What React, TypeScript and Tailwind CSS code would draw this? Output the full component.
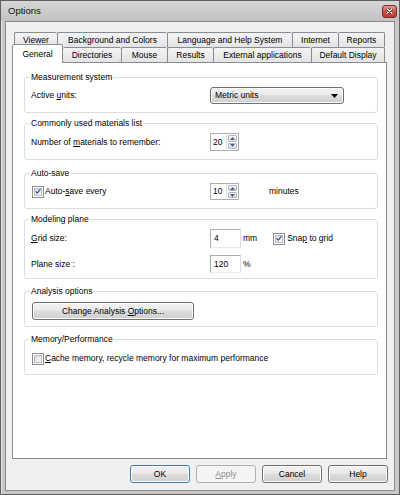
import React from "react";

const FONT = "font-['Liberation_Sans',Arial,sans-serif]";

function CheckMark() {
  return (
    <svg width="9" height="9" viewBox="0 0 9 9">
      <path d="M1.3 4.6 L3.4 7 L7.6 1.6" fill="none" stroke="#2f4a86" strokeWidth="1.7" strokeLinecap="round" strokeLinejoin="round" />
    </svg>
  );
}

function Checkbox({ checked }: { checked: boolean }) {
  return (
    <div className="w-[12px] h-[12px] shrink-0 border border-[#8f8f8f] bg-white p-px">
      <div className="w-full h-full border border-[#b9bec6] bg-gradient-to-br from-[#d7dbe1] to-[#f7f8f9] flex items-center justify-center">
        {checked && <CheckMark />}
      </div>
    </div>
  );
}

function SpinArrow({ up }: { up: boolean }) {
  return (
    <svg width="5" height="3" viewBox="0 0 5 3">
      <path d={up ? "M0 3 L2.5 0 L5 3 Z" : "M0 0 L5 0 L2.5 3 Z"} fill="#4d6185" />
    </svg>
  );
}

function Spinner({ value, h }: { value: string; h: string }) {
  return (
    <div className={`flex ${h}`}>
      <div className="w-[16px] h-full border border-[#abadb3] border-r-0 bg-white pl-[2px] flex items-center">
        {value}
      </div>
      <div className="w-[13px] h-full flex flex-col border border-[#abadb3] border-l-[#dbdfe6] bg-white p-px gap-px">
        <div className="flex-1 rounded-[1px] border border-[#b3b9c3] bg-gradient-to-b from-[#f6f6f6] to-[#dfe2e7] flex items-center justify-center">
          <SpinArrow up />
        </div>
        <div className="flex-1 rounded-[1px] border border-[#b3b9c3] bg-gradient-to-b from-[#f6f6f6] to-[#dfe2e7] flex items-center justify-center">
          <SpinArrow up={false} />
        </div>
      </div>
    </div>
  );
}

function TextBox({ value, h }: { value: string; h: string }) {
  return (
    <div className={`w-[31px] ${h} border border-[#abadb3] border-b-[#e3e9ef] border-r-[#dbdfe6] bg-white pl-[3px] flex items-center`}>
      {value}
    </div>
  );
}

function Group({ title, mt, children }: { title: string; mt: string; children: React.ReactNode }) {
  return (
    <fieldset className={`w-[354px] ${mt} border border-[#d5dfe5] rounded-[3px]`}>
      <legend className="ml-[5px] px-[1px] leading-[10px]">{title}</legend>
      {children}
    </fieldset>
  );
}

const btnBase =
  "h-[18px] rounded-[3px] border flex items-center justify-center bg-[linear-gradient(#f2f2f2,#ebebeb_45%,#dddddd_50%,#cfcfcf)] shadow-[inset_0_0_0_1px_#fcfcfc]";

function Tab({ label, w, last }: { label: string; w: string; last?: boolean }) {
  return (
    <div
      className={`${w} h-full shrink-0 border-t border-l ${last ? "border-r" : ""} border-[#898c95] rounded-t-[2px] bg-gradient-to-b from-[#f4f4f4] to-[#e4e4e4] flex items-center justify-center`}
    >
      {label}
    </div>
  );
}

export default function App() {
  return (
    <div className={`w-[400px] h-[495px] border border-[#5f5f5f] bg-[#c8c8c8] shadow-[inset_1px_1px_0_#e6e6e6] flex flex-col text-[8.5px] text-black ${FONT}`}>
      {/* Title bar */}
      <div className="h-[20px] shrink-0 flex items-center justify-between pl-[7px] pr-[2px] bg-gradient-to-b from-[#d6d6d6] to-[#c2c2c2]">
        <span className="text-[9.5px] text-[#111]">Options</span>
        <div className="w-[15px] h-[13px] rounded-[3px] border border-[#7d2b2b] bg-gradient-to-b from-[#e39b93] via-[#c9544a] to-[#b53c33] flex items-center justify-center">
          <svg width="7" height="6" viewBox="0 0 7 6">
            <path d="M1 0.8 L6 5.2 M6 0.8 L1 5.2" stroke="#3a1010" strokeWidth="2.6" strokeLinecap="round" />
            <path d="M1 0.8 L6 5.2 M6 0.8 L1 5.2" stroke="#ffffff" strokeWidth="1.4" strokeLinecap="round" />
          </svg>
        </div>
      </div>

      {/* Client area */}
      <div className="flex-1 mx-[4px] mb-[3px] border border-[#8a8a8a] bg-[#f0f0f0] flex flex-col pt-[10px] pl-[6px]">
        {/* Tab row 1 */}
        <div className="h-[15px] flex ml-[2px]">
          <Tab label="Viewer" w="w-[43px]" />
          <Tab label="Background and Colors" w="w-[110px]" />
          <Tab label="Language and Help System" w="w-[125px]" />
          <Tab label="Internet" w="w-[46px]" />
          <Tab label="Reports" w="w-[47px]" last />
        </div>
        {/* Tab row 2 */}
        <div className="h-[15px] flex items-end">
          <div className="relative z-10 w-[51px] h-[19px] -mb-px shrink-0 border-t border-l border-r border-[#898c95] rounded-t-[2px] bg-white flex justify-center pt-[3px]">
            General
          </div>
          <div className="w-[58px] h-full shrink-0 border-t border-[#898c95] rounded-t-[2px] bg-gradient-to-b from-[#f4f4f4] to-[#e4e4e4] flex items-center justify-center">
            Directories
          </div>
          <Tab label="Mouse" w="w-[46px]" />
          <Tab label="Results" w="w-[46px]" />
          <Tab label="External applications" w="w-[98px]" />
          <Tab label="Default Display" w="w-[74px]" last />
        </div>

        {/* Panel */}
        <div className="w-[375px] h-[397px] shrink-0 border border-[#898c95] bg-white flex flex-col pl-[11px]">
          <Group title="Measurement system" mt="mt-[9px]">
            <div className="flex items-center mt-[5px] mb-[8px] pl-[6px] h-[17px]">
              <span className="w-[179px] shrink-0">
                Active <u className="underline-offset-1">u</u>nits:
              </span>
              <div className="w-[134px] h-[17px] rounded-[3px] border border-[#707070] bg-[linear-gradient(#f2f2f2,#ebebeb_45%,#dddddd_50%,#cfcfcf)] shadow-[inset_0_0_0_1px_#fafafa] flex items-center justify-between pl-[4px] pr-[5px]">
                <span>Metric units</span>
                <svg width="7" height="4" viewBox="0 0 7 4">
                  <path d="M0 0 H7 L3.5 4 Z" fill="#000" />
                </svg>
              </div>
            </div>
          </Group>

          <Group title="Commonly used materials list" mt="mt-[5px]">
            <div className="flex items-center mt-[5px] mb-[8px] pl-[6px] h-[18px]">
              <span className="w-[179px] shrink-0">
                Number of <u className="underline-offset-1">m</u>aterials to remember:
              </span>
              <Spinner value="20" h="h-[18px]" />
            </div>
          </Group>

          <Group title="Auto-save" mt="mt-[8px]">
            <div className="flex items-center mt-[5px] mb-[8px] pl-[6px] h-[17px]">
              <div className="w-[179px] shrink-0 flex items-center pl-px gap-[1px]">
                <Checkbox checked />
                <span>
                  Auto-<u className="underline-offset-1">s</u>ave every
                </span>
              </div>
              <Spinner value="10" h="h-[17px]" />
              <span className="ml-[30px]">minutes</span>
            </div>
          </Group>

          <Group title="Modeling plane" mt="mt-[5px]">
            <div className="flex items-center mt-[5px] pl-[6px] h-[19px]">
              <span className="w-[179px] shrink-0">
                <u className="underline-offset-1">G</u>rid size:
              </span>
              <TextBox value="4" h="h-[19px]" />
              <span className="ml-[2px]">mm</span>
              <div className="ml-[16px] flex items-center gap-[2px]">
                <Checkbox checked />
                <span>
                  Sna<u className="underline-offset-1">p</u> to grid
                </span>
              </div>
            </div>
            <div className="flex items-center mt-[7px] mb-[5px] pl-[6px] h-[18px]">
              <span className="w-[179px] shrink-0">Plane size :</span>
              <TextBox value="120" h="h-[18px]" />
              <span className="ml-[2px]">%</span>
            </div>
          </Group>

          <Group title="Analysis options" mt="mt-[7px]">
            <div className="flex mt-[6px] mb-[6px] pl-[7px]">
              <div className={`${btnBase} w-[162px] border-[#707070]`}>
                <span>
                  Change Analysis <u className="underline-offset-1">O</u>ptions...
                </span>
              </div>
            </div>
          </Group>

          <Group title="Memory/Performance" mt="mt-[7px]">
            <div className="flex items-center gap-[1px] mt-[8px] mb-[9px] pl-[7px] h-[13px]">
              <Checkbox checked={false} />
              <span>
                <u className="underline-offset-1">C</u>ache memory, recycle memory for maximum performance
              </span>
            </div>
          </Group>
        </div>

        {/* Buttons */}
        <div className="flex justify-end gap-[6px] mt-[6px] pr-[6px]">
          <div className={`${btnBase} w-[60px] border-[#3c7fb1] shadow-[inset_0_0_0_1px_#9fd5f3]`}>OK</div>
          <div className="w-[60px] h-[18px] rounded-[3px] border border-[#adb2b5] bg-[#f4f4f4] text-[#8d8d8d] flex items-center justify-center">
            <span>
              <u className="underline-offset-1">A</u>pply
            </span>
          </div>
          <div className={`${btnBase} w-[60px] border-[#707070]`}>Cancel</div>
          <div className={`${btnBase} w-[60px] border-[#707070]`}>Help</div>
        </div>
      </div>
    </div>
  );
}
